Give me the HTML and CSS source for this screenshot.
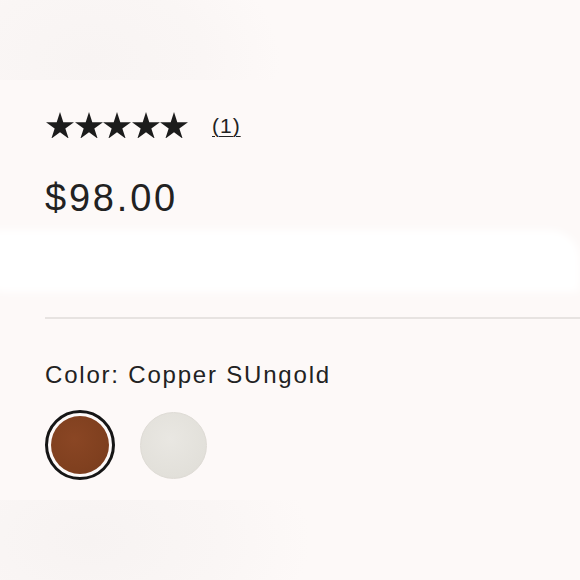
FILE: index.html
```html
<!DOCTYPE html>
<html lang="en">
<head>
<meta charset="utf-8">
<title>Product</title>
<link rel="stylesheet" href="styles.css">
</head>
<body>
<div class="fade fade-top"></div>
<main class="product">
  <div class="rating">
    <div class="stars" aria-label="5 out of 5 stars">
      <svg class="star" viewBox="2.45 0 95.1 90.45"><polygon points="50,0 61.23,34.55 97.55,34.55 68.16,55.9 79.39,90.45 50,69.1 20.61,90.45 31.84,55.9 2.45,34.55 38.77,34.55"/></svg>
      <svg class="star" viewBox="2.45 0 95.1 90.45"><polygon points="50,0 61.23,34.55 97.55,34.55 68.16,55.9 79.39,90.45 50,69.1 20.61,90.45 31.84,55.9 2.45,34.55 38.77,34.55"/></svg>
      <svg class="star" viewBox="2.45 0 95.1 90.45"><polygon points="50,0 61.23,34.55 97.55,34.55 68.16,55.9 79.39,90.45 50,69.1 20.61,90.45 31.84,55.9 2.45,34.55 38.77,34.55"/></svg>
      <svg class="star" viewBox="2.45 0 95.1 90.45"><polygon points="50,0 61.23,34.55 97.55,34.55 68.16,55.9 79.39,90.45 50,69.1 20.61,90.45 31.84,55.9 2.45,34.55 38.77,34.55"/></svg>
      <svg class="star" viewBox="2.45 0 95.1 90.45"><polygon points="50,0 61.23,34.55 97.55,34.55 68.16,55.9 79.39,90.45 50,69.1 20.61,90.45 31.84,55.9 2.45,34.55 38.77,34.55"/></svg>
    </div>
    <a class="count" href="#">(1)</a>
  </div>
  <div class="price">$98.00</div>
  <div class="band"></div>
  <hr class="divider">
  <div class="color-label">Color: Copper SUngold</div>
  <div class="swatches">
    <span class="swatch swatch-copper selected"></span>
    <span class="swatch swatch-sand"></span>
  </div>
</main>
<div class="fade fade-bottom"></div>
</body>
</html>
```
FILE: styles.css
```css
html, body {
  margin: 0;
  padding: 0;
  background: #fdf9f8;
  font-family: "Liberation Sans", Arial, sans-serif;
  color: #222;
  overflow: hidden;
}
.fade {
  height: 80px;
  background: radial-gradient(ellipse 190px 130px at 90px 60px, #f8f4f3 0%, #faf6f5 60%, #fdf9f8 100%);
}
.fade-bottom {
  height: 80px;
  background: radial-gradient(ellipse 220px 140px at 90px 40px, #f7f3f2 0%, #faf6f5 60%, #fdf9f8 100%);
}
.product {
  padding: 0 0 20px 45px;
}
.rating {
  display: flex;
  align-items: center;
  gap: 24px;
  margin-top: 32px;
  height: 26px;
}
.stars {
  display: flex;
  gap: 0.5px;
  padding-left: 1px;
}
.star {
  width: 28px;
  height: 26.6px;
  fill: #1c1c1c;
}
.count {
  color: #222;
  font-size: 21px;
  text-decoration: underline;
  text-underline-offset: 3px;
  text-decoration-thickness: 1px;
  letter-spacing: 1px;
  margin-top: 2px;
}
.price {
  margin-top: 38px;
  font-size: 38px;
  line-height: 44px;
  letter-spacing: 2.8px;
  color: #222;
}
.band {
  height: 62px;
  margin: 10px 0 0 -60px;
  background: #ffffff;
  filter: blur(4px);
  border-radius: 10px 30px 0 20px;
}
.divider {
  border: 0;
  height: 2px;
  background: #e7e3e1;
  margin: 25px 0 0 0;
}
.color-label {
  margin-top: 42px;
  font-size: 24px;
  line-height: 28px;
  letter-spacing: 1.8px;
  color: #222;
}
.swatches {
  display: flex;
  align-items: center;
  gap: 25px;
  margin-top: 21px;
  height: 70px;
}
.swatch {
  display: block;
  border-radius: 50%;
  box-sizing: border-box;
}
.swatch-copper {
  width: 70px;
  height: 70px;
  border: 3px solid #161616;
  padding: 3px;
  background: #fbf4ef content-box;
  background-image: radial-gradient(circle at 40% 40%, #8a4624 0%, #80401f 60%, #763a1c 100%);
  background-clip: content-box;
}
.swatch-sand {
  width: 67px;
  height: 67px;
  background: radial-gradient(circle at 45% 40%, #e9e7e2 0%, #e2e0da 70%, #dcd9d3 100%);
  border: 1px solid #dedbd5;
}
```
